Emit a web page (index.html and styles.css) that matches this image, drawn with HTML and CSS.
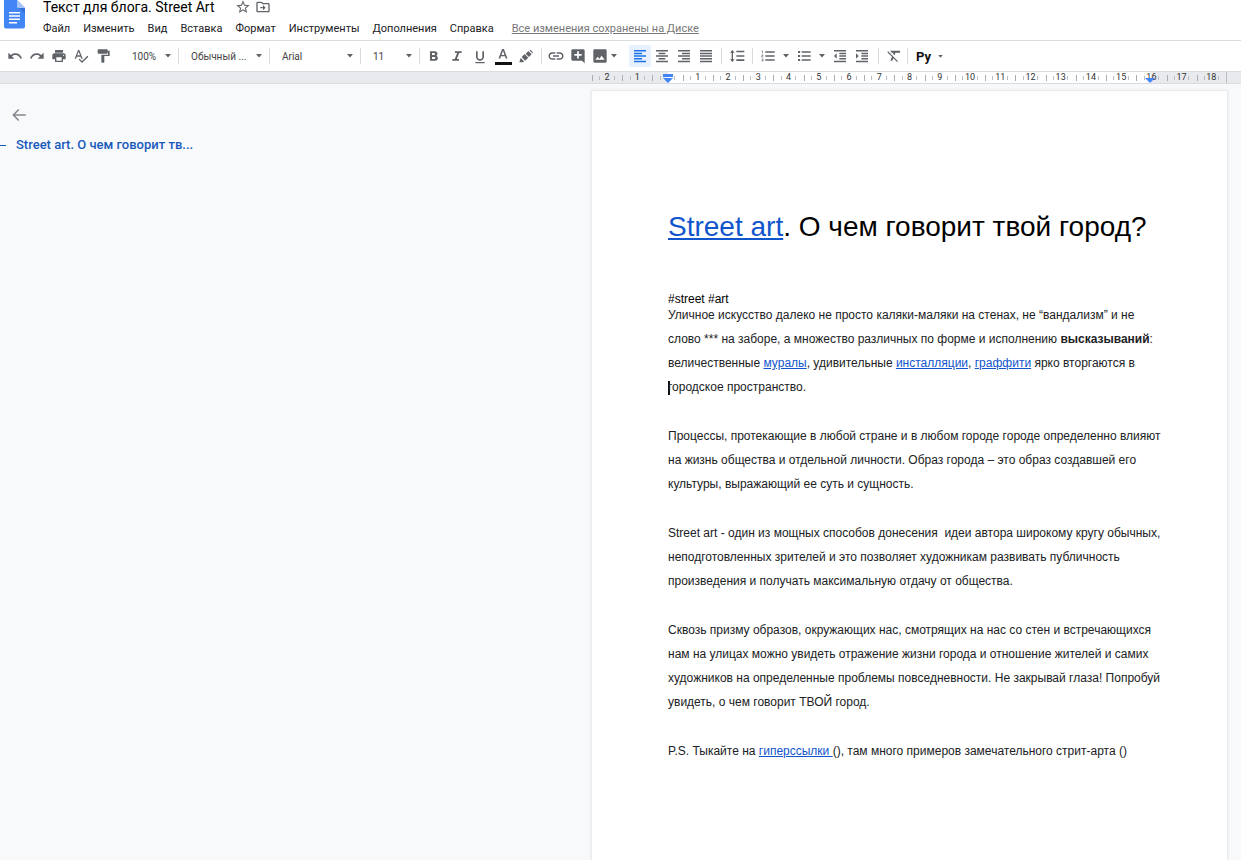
FILE: index.html
```html
<!DOCTYPE html>
<html lang="ru">
<head>
<meta charset="utf-8">
<title>Текст для блога. Street Art</title>
<link rel="stylesheet" href="styles.css">
</head>
<body>
<svg class="sprite" aria-hidden="true">
  <symbol id="caret" viewBox="0 0 6 4"><path d="M0 0h6L3 3.5z"/></symbol>
</svg>
<header class="header">
  <svg class="logo" viewBox="0 0 21 29" aria-hidden="true">
    <path fill="#4285f4" d="M0 0h13l8 8v18.500a2 2 0 0 1-2 2H2a2 2 0 0 1-2-2z"/>
    <path fill="#a6c5fa" d="M13 0l8 8h-6.500a1.500 1.500 0 0 1-1.500-1.500z"/>
    <path fill="#3771d8" d="M15 8h6v6z"/>
    <path fill="#fff" d="M5 12h11v1.500H5zm0 3.300h11v1.500H5zm0 3.300h11v1.500H5zM5 22h8v1.500H5z"/>
  </svg>
  <div class="heading">
    <div class="title-row">
      <input class="doc-title" type="text" aria-label="Название документа" value="Текст для блога. Street Art">
      <button class="plain" aria-label="Пометить"><svg class="icon" viewBox="0 0 24 24"><path d="M22 9.240l-7.190-.62L12 2 9.190 8.630 2 9.240l5.460 4.730L5.820 21 12 17.270 18.180 21l-1.630-7.030L22 9.240zM12 15.400l-3.760 2.270 1-4.280-3.320-2.880 4.380-.38L12 6.100l1.710 4.040 4.380.38-3.320 2.880 1 4.280L12 15.400z"/></svg></button>
      <button class="plain" aria-label="Переместить"><svg class="icon" viewBox="0 0 24 24"><path d="M20 6h-8l-2-2H4c-1.100 0-2 .9-2 2v12c0 1.100.9 2 2 2h16c1.100 0 2-.9 2-2V8c0-1.100-.9-2-2-2zm0 12H4V6h5.200l2 2H20v10zm-8-1l4-4-4-4v3H8v2h4z"/></svg></button>
    </div>
    <nav class="menu">
      <button>Файл</button><button>Изменить</button><button>Вид</button><button>Вставка</button><button>Формат</button><button>Инструменты</button><button>Дополнения</button><button>Справка</button>
      <a class="saved" href="#">Все изменения сохранены на Диске</a>
    </nav>
  </div>
</header>

<div class="toolbar" role="toolbar">
  <div class="group history">
    <button aria-label="Отменить"><svg class="icon" viewBox="0 0 24 24"><path d="M12.500 8c-2.650 0-5.050.99-6.900 2.600L2 7v9h9l-3.620-3.620c1.390-1.160 3.160-1.880 5.120-1.880 3.540 0 6.550 2.310 7.600 5.500l2.370-.78C21.080 11.030 17.150 8 12.500 8z"/></svg></button>
    <button aria-label="Повторить"><svg class="icon" viewBox="0 0 24 24"><path d="M18.400 10.600C16.550 8.990 14.150 8 11.500 8c-4.650 0-8.580 3.030-9.960 7.220L3.900 16c1.050-3.190 4.050-5.500 7.600-5.500 1.950 0 3.730.72 5.120 1.880L13 16h9V7l-3.600 3.600z"/></svg></button>
    <button aria-label="Печать"><svg class="icon" viewBox="0 0 24 24"><path d="M19 8H5c-1.660 0-3 1.340-3 3v6h4v4h12v-4h4v-6c0-1.660-1.340-3-3-3zm-3 11H8v-5h8v5zm3-7c-.55 0-1-.45-1-1s.45-1 1-1 1 .45 1 1-.45 1-1 1zm-1-9H6v4h12V3z"/></svg></button>
    <button aria-label="Правописание"><svg class="icon" viewBox="0 0 24 24"><path d="M12.450 16h2.090L9.430 3H7.570L2.460 16h2.090l1.120-3h5.640l1.140 3zm-6.020-5L8.500 5.480 10.570 11H6.430zm15.160.59l-8.090 8.090L9.830 16l-1.410 1.410 5.090 5.090L23 13l-1.410-1.410z"/></svg></button>
    <button aria-label="Копировать форматирование"><svg class="icon" viewBox="0 0 24 24"><path d="M19 4V3c0-.55-.45-1-1-1H5c-.55 0-1 .45-1 1v4.500c0 .55.45 1 1 1h13c.55 0 1-.45 1-1V6h.5v4H9.500v11c0 .55.45 1 1 1h2.500c.55 0 1-.45 1-1v-9h8V4h-3z"/></svg></button>
  </div>
  <label class="picker zoom"><select aria-label="Масштаб"><option>100%</option></select><svg class="caret"><use href="#caret"/></svg></label>
  <label class="picker style"><select aria-label="Стиль"><option>Обычный ...</option></select><svg class="caret"><use href="#caret"/></svg></label>
  <label class="picker font"><select aria-label="Шрифт"><option>Arial</option></select><svg class="caret"><use href="#caret"/></svg></label>
  <label class="picker size"><select aria-label="Размер"><option>11</option></select><svg class="caret"><use href="#caret"/></svg></label>
  <div class="group text-style">
    <button aria-label="Полужирный"><svg class="icon" viewBox="0 0 24 24"><path d="M15.600 11.790c.97-.67 1.650-1.770 1.650-2.790 0-2.260-1.750-4-4-4H6v14h8.040c2.090 0 3.710-1.700 3.710-3.790 0-1.520-.86-2.820-2.150-3.420zM9 7.500h3c.83 0 1.500.67 1.500 1.500s-.67 1.500-1.500 1.500H9v-3zm3.500 9H9v-3h3.500c.83 0 1.500.67 1.500 1.500s-.67 1.500-1.500 1.500z"/></svg></button>
    <button aria-label="Курсив"><svg class="icon" viewBox="0 0 24 24"><path d="M9 5v2.500h3.200L8.700 16.500H5V19h10v-2.500h-3.200l3.500-9H19V5z"/></svg></button>
    <button aria-label="Подчеркнутый"><svg class="icon" viewBox="0 0 24 24"><path d="M12 19c3.310 0 6-2.690 6-6V5h-2.500v8c0 1.930-1.570 3.500-3.500 3.500S8.500 14.930 8.500 13V5H6v8c0 3.310 2.690 6 6 6zm-7 2v2h14v-2H5z"/></svg></button>
    <button aria-label="Цвет текста"><svg class="color-icon" viewBox="0 0 18 18"><path d="M8.100 2L4.500 11.500h1.700l.8-2.200h4l.8 2.200h1.700L9.900 2zM7.500 7.900L9 3.800l1.500 4.100z"/><path fill="#111" d="M1 15h17v3H1z"/></svg></button>
    <button aria-label="Цвет выделения"><svg class="icon" viewBox="0 0 24 24"><path d="M4 15l5 5-1.500 1.500H2zM5.500 13.500l4.500-4.500 5.500 5.500-5 4.500zM11.500 8.500L15.500 4.500l5 5-4 4zM17 3.500L18.500 2.500l4 4-1 1.500z"/></svg></button>
  </div>
  <div class="group insert">
    <button aria-label="Вставить ссылку"><svg class="link-icon" viewBox="0 0 24 24"><path d="M3.900 12c0-1.710 1.390-3.100 3.100-3.100h4V7H7c-2.760 0-5 2.240-5 5s2.240 5 5 5h4v-1.900H7c-1.710 0-3.100-1.390-3.100-3.100zM8 13h8v-2H8v2zm9-6h-4v1.900h4c1.710 0 3.100 1.390 3.100 3.100s-1.390 3.100-3.100 3.100h-4V17h4c2.760 0 5-2.240 5-5s-2.240-5-5-5z"/></svg></button>
    <button aria-label="Добавить комментарий"><svg class="icon" viewBox="0 0 24 24"><path d="M22 4c0-1.100-.9-2-2-2H4c-1.100 0-2 .9-2 2v13c0 1.100.9 2 2 2h14l4 4V4zm-4.500 7.700h-4.200v4.200h-2.600v-4.200H6.500V9.100h4.200V4.900h2.600v4.200h4.200z"/></svg></button>
    <button aria-label="Вставить изображение"><svg class="icon" viewBox="0 0 24 24"><path d="M22 20V4c0-1.500-1-2-2-2H4c-1.500 0-2 1-2 2v16c0 1.500 1 2 2 2h16c1.500 0 2-1 2-2zM8.500 13l2.500 3 3.500-4.500L19 17.500H5z"/></svg></button>
    <svg class="caret"><use href="#caret"/></svg>
  </div>
  <div class="group align">
    <button class="active" aria-label="По левому краю"><svg class="icon" viewBox="0 0 24 24"><path d="M15 15H3v2.200h12zm0-8H3v2.200h12zM3 13.200h18V11H3zM3 21.200h18V19H3zM3 3v2.200h18V3z"/></svg></button>
    <button aria-label="По центру"><svg class="icon" viewBox="0 0 24 24"><path d="M7 15v2.200h10V15zM3 21.200h18V19H3zm0-8h18V11H3zM7 7v2.200h10V7zM3 3v2.200h18V3z"/></svg></button>
    <button aria-label="По правому краю"><svg class="icon" viewBox="0 0 24 24"><path d="M3 21.200h18V19H3zm6-4h12V15H9zm-6-4h18V11H3zm6-4h12V7H9zM3 3v2.200h18V3z"/></svg></button>
    <button aria-label="По ширине"><svg class="icon" viewBox="0 0 24 24"><path d="M3 21.200h18V19H3zm0-4h18V15H3zm0-4h18V11H3zm0-4h18V7H3zM3 3v2.200h18V3z"/></svg></button>
  </div>
  <div class="group spacing">
    <button aria-label="Интервал"><svg class="icon" viewBox="0 0 24 24"><path d="M6 7h2.500L5 3 1.500 7H4v10H1.500L5 21l3.500-4H6zm5-3v2.400h12V4zm0 15.600h12V17H11zm0-6.400h12v-2.400H11z"/></svg></button>
  </div>
  <div class="group lists">
    <button aria-label="Нумерованный список"><svg class="icon" viewBox="0 0 24 24"><path d="M2 17h2v.5H3v1h1v.5H2v1h3v-4H2zm1-9h1V4H2v1h1zm-1 3h1.800L2 13.100v.9h3v-1H3.200L5 10.900V10H2zm6-6v2.200h14V5zm0 14.200h14V17H8zm0-6h14V11H8z"/></svg></button>
    <button class="more" aria-label="Варианты нумерации"><svg class="caret"><use href="#caret"/></svg></button>
    <button aria-label="Маркированный список"><svg class="icon" viewBox="0 0 24 24"><path d="M3 4.500h3.200v3H3zm0 6h3.200v3H3zm0 6h3.200v3H3zM8.500 5v2.200H22V5zm0 14.200H22V17H8.500zm0-6H22V11H8.500z"/></svg></button>
    <button class="more" aria-label="Варианты маркеров"><svg class="caret"><use href="#caret"/></svg></button>
    <button aria-label="Уменьшить отступ"><svg class="icon" viewBox="0 0 24 24"><path d="M11 17.200h10V15H11zM3 12l4 4V8zm0 9.200h18V19H3zM3 3v2.200h18V3zm8 6.200h10V7H11zm0 4h10V11H11z"/></svg></button>
    <button aria-label="Увеличить отступ"><svg class="icon" viewBox="0 0 24 24"><path d="M3 21.200h18V19H3zM3 8v8l4-4zm8 9.200h10V15H11zM3 3v2.200h18V3zm8 6.200h10V7H11zm0 4h10V11H11z"/></svg></button>
  </div>
  <div class="group clear">
    <button aria-label="Очистить форматирование"><svg class="icon" viewBox="0 0 24 24"><path d="M3.270 5L2 6.270l6.970 6.970L6.500 19h3l1.570-3.660L16.730 21 18 19.730 3.550 5.270 3.270 5zM6 4v.18L8.820 7h2.400l-.72 1.680 2.100 2.100L14.210 7H21V4H6z"/></svg></button>
  </div>
  <button class="input-tools" aria-label="Способ ввода">Рy<svg class="caret-small"><use href="#caret"/></svg></button>
</div>

<div class="ruler">
  <div class="scale">
    <span class="cm">2</span><span class="cm">1</span>
    <span class="cm"><svg class="indent" viewBox="0 0 10 9"><path d="M0 0h10v3H0zM0 4h10L5 9z"/></svg></span>
    <span class="cm">1</span><span class="cm">2</span><span class="cm">3</span><span class="cm">4</span><span class="cm">5</span><span class="cm">6</span><span class="cm">7</span><span class="cm">8</span><span class="cm">9</span><span class="cm">10</span><span class="cm">11</span><span class="cm">12</span><span class="cm">13</span><span class="cm">14</span><span class="cm">15</span>
    <span class="cm">16<svg class="right-indent" viewBox="0 0 10 5"><path d="M0 0h10L5 5z"/></svg></span>
    <span class="cm">17</span><span class="cm">18</span>
  </div>
</div>

<main class="workspace">
  <aside class="outline">
    <button class="back" aria-label="Закрыть структуру"><svg class="back-icon" viewBox="0 0 24 24"><path d="M21 11H6.800l5.600-5.600L11 4l-8 8 8 8 1.400-1.400L6.800 13H21z"/></svg></button>
    <a class="entry" href="#top">Street art. О чем говорит тв...</a>
  </aside>
  <article class="page">
    <h1 id="top"><a href="#">Street art</a>. О чем говорит твой город?</h1>
    <p class="tags">#street #art</p>
    <p>Уличное искусство далеко не просто каляки-маляки на стенах, не “вандализм” и не<br>слово *** на заборе, а множество различных по форме и исполнению <b>высказываний</b>:<br>величественные <a href="#">муралы</a>, удивительные <a href="#">инсталляции</a>, <a href="#">граффити</a> ярко вторгаются в<br><span class="cursor"></span>городское пространство.</p>
    <p>Процессы, протекающие в любой стране и в любом городе городе определенно влияют<br>на жизнь общества и отдельной личности. Образ города – это образ создавшей его<br>культуры, выражающий ее суть и сущность.</p>
    <p>Street art - один из мощных способов донесения&nbsp; идеи автора широкому кругу обычных,<br>неподготовленных зрителей и это позволяет художникам развивать публичность<br>произведения и получать максимальную отдачу от общества.</p>
    <p>Сквозь призму образов, окружающих нас, смотрящих на нас со стен и встречающихся<br>нам на улицах можно увидеть отражение жизни города и отношение жителей и самих<br>художников на определенные проблемы повседневности. Не закрывай глаза! Попробуй<br>увидеть, о чем говорит ТВОЙ город.</p>
    <p>P.S. Тыкайте на <a href="#">гиперссылки </a>(), там много примеров замечательного стрит-арта ()</p>
  </article>
</main>
</body>
</html>
```
FILE: styles.css
```css
* { box-sizing: border-box; }

body {
  margin: 0;
  min-height: 100vh;
  display: flex;
  flex-direction: column;
  overflow: hidden;
  background: #f8f9fa;
  font-family: Roboto, sans-serif;
  color: #202124;
}

button, input, select {
  margin: 0;
  padding: 0;
  border: 0;
  background: none;
  color: inherit;
  font: inherit;
}

svg { display: block; flex: none; fill: #5f6368; }
.sprite { position: absolute; width: 0; height: 0; }
.icon { width: 16px; height: 16px; }
.link-icon { width: 18px; height: 18px; }
.color-icon { width: 18px; height: 18px; }
.caret { width: 6px; height: 4px; }
.caret-small { width: 5px; height: 3px; }

/* Header */
.header {
  display: flex;
  gap: 18px;
  height: 41px;
  padding-left: 4px;
  background: #fff;
  border-bottom: 1px solid #dadce0;
}
.logo { width: 21px; height: 29px; }
.title-row { display: flex; align-items: center; height: 14px; }
.doc-title { width: 190px; height: 18px; font-size: 14px; line-height: 18px; color: #000; }
.plain { width: 20px; }
.plain:first-of-type { margin-left: 2px; }
.menu {
  display: flex;
  align-items: center;
  gap: 13px;
  height: 28px;
  font-size: 11px;
  white-space: nowrap;
}
.saved { margin-left: 5px; color: #777; text-decoration: underline; }

/* Toolbar */
.toolbar {
  display: flex;
  align-items: center;
  height: 30px;
  padding-left: 4px;
  background: #fff;
}
.group, .picker {
  display: flex;
  align-items: center;
  height: 16px;
  border-right: 1px solid #dadce0;
}
.group button {
  display: flex;
  align-items: center;
  justify-content: center;
  width: 22px;
  height: 22px;
  border-radius: 2px;
}
.picker { font-size: 10px; color: #444; padding-right: 7px; }
.picker select { flex: 1; min-width: 0; height: 16px; appearance: none; }
.history, .insert, .align-last { border-right: 0; }
.zoom { width: 65px; padding-left: 18px; }
.style, .font { width: 91px; padding-left: 12px; }
.size { width: 59px; padding-left: 12px; }
.text-style { padding: 0 4px 0 2px; }
.text-style button { width: 23px; }
.insert { padding: 0 12px 0 3px; }
.align, .spacing { padding-right: 4px; }
.spacing, .lists, .clear { padding-left: 4px; }
.lists { padding-right: 5px; }
.clear { padding-right: 2px; }
.group .more { width: 14px; }
.group .active { background: #e8f0fe; }
.active svg { fill: #1a73e8; }
.input-tools {
  display: flex;
  align-items: center;
  gap: 7px;
  padding-left: 8px;
  color: #111;
  font-size: 13px;
  font-weight: 700;
}

/* Ruler, aligned with the page column */
.ruler, .workspace {
  display: grid;
  grid-template-columns: 1fr 635px;
  padding-right: 14px;
}
.ruler {
  height: 13px;
  background: #e8eaed;
  border-top: 1px solid #dadce0;
  border-bottom: 1px solid #dadce0;
}
.scale {
  grid-column: 2;
  display: grid;
  grid-template-columns: repeat(21, 1fr);
  background: linear-gradient(to right, transparent 12%, #fff 12%, #fff 88%, transparent 88%);
}
.cm {
  position: relative;
  display: flex;
  justify-content: center;
  font-size: 9px;
  line-height: 11px;
  color: #333;
  background:
    linear-gradient(#aaadb1, #aaadb1) 0 3px / 1px 6px no-repeat,
    linear-gradient(#babdc1, #babdc1) 25% 4px / 1px 4px no-repeat,
    linear-gradient(#babdc1, #babdc1) 75% 4px / 1px 4px no-repeat;
}
.cm:last-child { border-right: 1px solid #babdc1; }
.indent { width: 10px; height: 9px; margin-top: 2px; fill: #4285f4; }
.right-indent { position: absolute; top: 6px; left: 9px; width: 10px; height: 5px; fill: #4285f4; }

/* Outline */
.workspace { flex: 1; }
.outline { padding: 22px 0; }
.back { display: block; margin-left: 10px; }
.back-icon { width: 18px; height: 18px; fill: #80868b; }
.entry {
  display: flex;
  align-items: center;
  gap: 10px;
  margin-top: 12px;
  color: #185abc;
  font-size: 13px;
  font-weight: 500;
  line-height: 18px;
  text-decoration: none;
}
.entry::before { content: ""; width: 6px; height: 1px; background: #185abc; }

/* Page */
.page {
  margin-top: 7px;
  padding: 114px 0 76px 76px;
  background: #fff;
  box-shadow: 0 0 2px 1px #e3e5e8;
  font-family: "Liberation Sans", Arial, sans-serif;
  font-size: 12px;
  line-height: 24px;
  white-space: nowrap;
}
.page h1 {
  margin: 0 0 46px;
  color: #000;
  font-size: 28px;
  font-weight: 400;
  line-height: 44px;
}
.page p { margin: 0 0 25px; }
.page .tags { margin: 0; color: #000; line-height: 8px; }
.page a { color: #1155cc; }
.cursor {
  display: inline-block;
  width: 2px;
  height: 14px;
  margin: 0 -2px 0 0;
  background: #111;
  vertical-align: middle;
}
```
